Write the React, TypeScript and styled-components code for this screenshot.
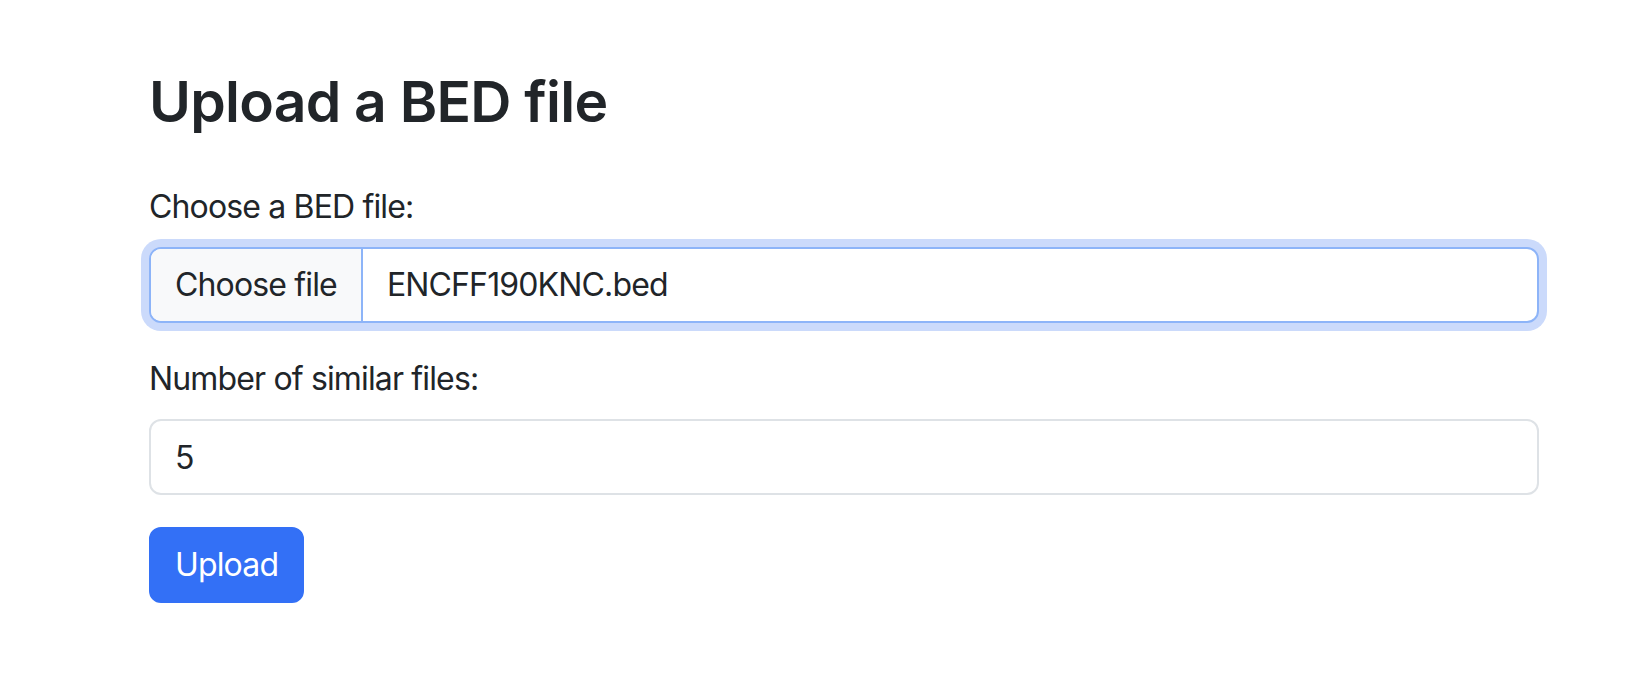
import React from "react";
import styled, { createGlobalStyle } from "styled-components";

const GlobalStyle = createGlobalStyle`
  html, body {
    margin: 0;
    padding: 0;
    background: #ffffff;
  }
  body {
    font-family: Inter, "Noto Sans", "Liberation Sans", sans-serif;
    color: #212529;
    font-size: 32px;
    line-height: 1.5;
    letter-spacing: -0.85px;
  }
  * { box-sizing: border-box; }
`;

const Page = styled.main`
  padding: 68px 0 0 149px;
  width: 1539px;
`;

const Title = styled.h2`
  margin: 0 0 47px;
  font-size: 57px;
  font-weight: 600;
  line-height: 1.2;
  letter-spacing: -0.75px;
  color: #212529;
`;

const Form = styled.form`
  display: flex;
  flex-direction: column;
`;

const Field = styled.div`
  display: flex;
  flex-direction: column;
  margin-bottom: 32px;
`;

const Label = styled.label`
  display: block;
  margin-bottom: 16px;
  font-size: 32px;
  line-height: 48px;
`;

const FileControl = styled.div<{ $focused?: boolean }>`
  display: flex;
  align-items: stretch;
  height: 76px;
  border: 2px solid ${(p) => (p.$focused ? "#8db4f8" : "#dee2e6")};
  border-radius: 12px;
  background: #ffffff;
  overflow: hidden;
  box-shadow: ${(p) => (p.$focused ? "0 0 0 8px #cbdafb" : "none")};
`;

const FileButton = styled.span`
  display: flex;
  align-items: center;
  padding: 0 24px;
  background: #f8f9fa;
  border-right: 2px solid #8db4f8;
  color: #212529;
  font-size: 32px;
  line-height: 48px;
  white-space: nowrap;
`;

const FileName = styled.span`
  display: flex;
  align-items: center;
  padding: 0 24px;
  font-size: 32px;
  line-height: 48px;
  color: #212529;
`;

const TextInput = styled.input`
  display: block;
  width: 100%;
  height: 76px;
  padding: 12px 24px;
  border: 2px solid #dee2e6;
  border-radius: 12px;
  font: inherit;
  font-size: 32px;
  line-height: 48px;
  letter-spacing: -0.85px;
  color: #212529;
  background: #ffffff;
  outline: none;
`;

const SubmitButton = styled.button`
  align-self: flex-start;
  height: 76px;
  padding: 12px 24px;
  border: 2px solid #3370f6;
  border-radius: 12px;
  background: #3370f6;
  color: #ffffff;
  font: inherit;
  font-size: 32px;
  line-height: 48px;
  letter-spacing: -0.85px;
  cursor: pointer;
`;

export default function App() {
  return (
    <>
      <GlobalStyle />
      <Page>
        <Title>Upload a BED file</Title>
        <Form onSubmit={(e) => e.preventDefault()}>
          <Field>
            <Label>Choose a BED file:</Label>
            <FileControl $focused>
              <FileButton>Choose file</FileButton>
              <FileName>ENCFF190KNC.bed</FileName>
            </FileControl>
          </Field>
          <Field>
            <Label htmlFor="num">Number of similar files:</Label>
            <TextInput id="num" type="text" defaultValue="5" />
          </Field>
          <div>
            <SubmitButton type="submit">Upload</SubmitButton>
          </div>
        </Form>
      </Page>
    </>
  );
}
